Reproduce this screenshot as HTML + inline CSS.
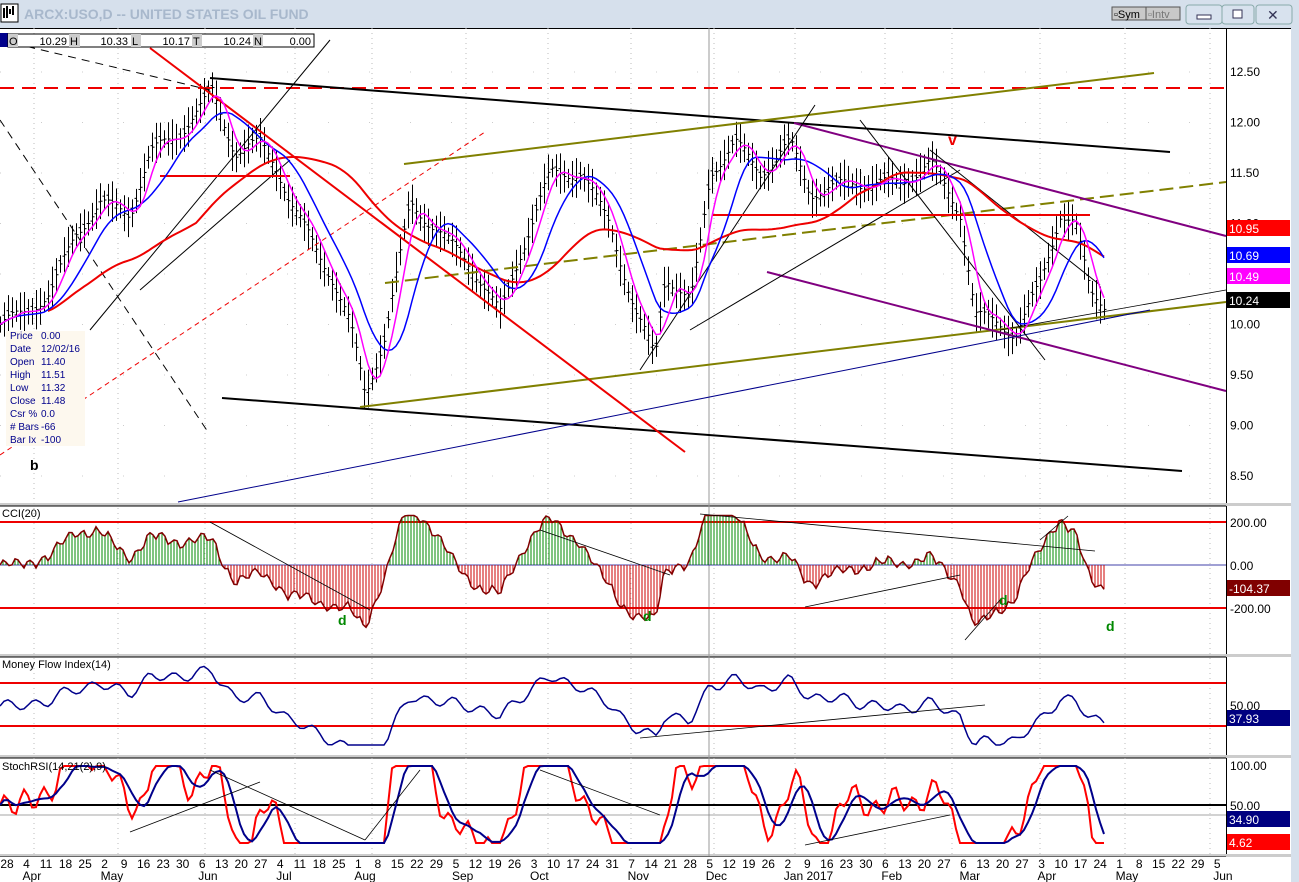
<!DOCTYPE html>
<html><head><meta charset="utf-8"><style>
body{margin:0;width:1299px;height:882px;overflow:hidden;background:#fff;font-family:"Liberation Sans",sans-serif}
#w{position:absolute;left:0;top:0}
</style></head><body>
<svg id="w" width="1299" height="882" xmlns="http://www.w3.org/2000/svg" font-family="Liberation Sans, sans-serif">
<rect x="0" y="0" width="1299" height="28" fill="#d6e0ec"/>
<rect x="1" y="4" width="17" height="18" fill="#fff" stroke="#000"/>
<path d="M4 18V8M7 18V6M10 14V9M13 15V6" stroke="#000" stroke-width="2"/>
<text x="24" y="19" font-size="14" font-weight="bold" fill="#a8b8cc">ARCX:USO,D -- UNITED STATES OIL FUND</text>
<rect x="1112" y="7" width="34" height="13" fill="#c8c8c8" stroke="#555"/><text x="1114" y="18" font-size="11">▫Sym</text>
<rect x="1146" y="7" width="34" height="13" fill="#c8c8c8" stroke="#555"/><text x="1148" y="18" font-size="11" fill="#777">▫Intv</text>
<rect x="1186" y="5" width="36" height="19" rx="3" fill="#d8e2ee" stroke="#8aa"/><rect x="1197" y="15" width="14" height="4" fill="#fff" stroke="#335"/>
<rect x="1222" y="5" width="32" height="19" rx="3" fill="#d8e2ee" stroke="#8aa"/><rect x="1233" y="10" width="9" height="8" fill="#fff" stroke="#335"/>
<rect x="1256" y="5" width="36" height="19" rx="3" fill="#d8e2ee" stroke="#8aa"/><text x="1267" y="20" font-size="14" fill="#335">✕</text>
<rect x="1291" y="28" width="8" height="854" fill="#d6e0ec"/>
<g id="g"></g>
<rect x="0" y="33" width="8" height="14" fill="#00008b"/>
<g font-size="11">
<rect x="8" y="34" width="306" height="13" fill="#fff" stroke="#000"/>
<rect x="8" y="34" width="10" height="13" fill="#ccc"/><text x="9" y="45">O</text><text x="67" y="45" text-anchor="end">10.29</text>
<rect x="69" y="34" width="11" height="13" fill="#ccc"/><text x="70" y="45">H</text><text x="128" y="45" text-anchor="end">10.33</text>
<rect x="131" y="34" width="10" height="13" fill="#ccc"/><text x="132" y="45">L</text><text x="190" y="45" text-anchor="end">10.17</text>
<rect x="192" y="34" width="10" height="13" fill="#ccc"/><text x="193" y="45">T</text><text x="251" y="45" text-anchor="end">10.24</text>
<rect x="253" y="34" width="10" height="13" fill="#ccc"/><text x="254" y="45">N</text><text x="311" y="45" text-anchor="end">0.00</text>
</g>
<rect x="6" y="331" width="79" height="115" fill="#fdf8ee"/>
<g font-size="10" fill="#00008b">
<text x="10" y="339">Price</text><text x="41" y="339">0.00</text>
<text x="10" y="352">Date</text><text x="41" y="352">12/02/16</text>
<text x="10" y="365">Open</text><text x="41" y="365">11.40</text>
<text x="10" y="378">High</text><text x="41" y="378">11.51</text>
<text x="10" y="391">Low</text><text x="41" y="391">11.32</text>
<text x="10" y="404">Close</text><text x="41" y="404">11.48</text>
<text x="10" y="417">Csr %</text><text x="41" y="417">0.0</text>
<text x="10" y="430"># Bars</text><text x="41" y="430">-66</text>
<text x="10" y="443">Bar Ix</text><text x="41" y="443">-100</text>
</g>
</svg>
<script>
var g=document.getElementById('g'),s='';
function L(x1,y1,x2,y2,c,w,d){s+='<line x1="'+x1+'" y1="'+y1+'" x2="'+x2+'" y2="'+y2+'" stroke="'+c+'" stroke-width="'+(w||1)+'"'+(d?' stroke-dasharray="'+d+'"':'')+'/>';}
function T(x,y,t,c,sz,a,f){s+='<text x="'+x+'" y="'+y+'" fill="'+(c||'#000')+'" font-size="'+(sz||12)+'"'+(a?' text-anchor="'+a+'"':'')+(f?' font-weight="bold"':'')+'>'+t+'</text>';}
function R(x,y,w,h,c){s+='<rect x="'+x+'" y="'+y+'" width="'+w+'" height="'+h+'" fill="'+c+'"/>';}
L(0,28.5,1291,28.5,'#000',1);L(1226.5,28,1226.5,856,'#000',1);
[505,656,757,856].forEach(function(y){R(0,y-2,1291,3,'#ccc');L(0,y+1,1226,y+1,'#000',1);});
var vx=[34,118,205,295,372,466,548,631,714,795,885,952,1040,1125,1210];
vx.forEach(function(x){L(x,28,x,856,'#bbb',1,'1 4');});
L(709,28,709,856,'#999',1);
function py(p){return 72+(12.5-p)*101;}
[12.5,12,11.5,11,10.5,10,9.5,9,8.5].forEach(function(p){L(0,py(p),1226,py(p),'#ccc',1,'1 40');T(1230,py(p)+4,p.toFixed(2),'#000',12);});
var k=[[0,10.0],[20,10.1],[50,10.3],[75,10.9],[100,11.2],[130,11.1],[150,11.7],[180,11.9],[212,12.3],[235,11.7],[260,11.8],[275,11.6],[290,11.2],[330,10.5],[350,10.0],[365,9.3],[385,9.9],[410,11.2],[440,10.9],[470,10.6],[500,10.1],[520,10.7],[550,11.5],[580,11.5],[610,11.0],[635,10.1],[655,9.7],[665,10.5],[690,10.2],[700,10.8],[710,11.5],[735,11.8],[760,11.5],[790,11.8],[810,11.3],[850,11.4],[900,11.4],[930,11.6],[960,11.1],[975,10.1],[1000,10.0],[1015,9.9],[1040,10.4],[1060,11.1],[1075,11.0],[1090,10.3],[1105,10.2]];
var P=[];for(var x=0;x<=1105;x+=4){var i=0;while(k[i+1][0]<x)i++;var a=k[i],b=k[i+1],t=(x-a[0])/(b[0]-a[0]);P.push([x,a[1]+(b[1]-a[1])*t+Math.sin(x*1.7)*0.06]);}
P.forEach(function(q,j){var h=0.08+Math.abs(Math.sin(j*2.3))*0.12;L(q[0]+0.5,py(q[1]+h),q[0]+0.5,py(q[1]-h),'#000',1);L(q[0]-1.5,py(q[1]+Math.sin(j)*0.05),q[0],py(q[1]+Math.sin(j)*0.05),'#000',1);L(q[0]+1,py(q[1]),q[0]+2.5,py(q[1]),'#000',1);});
function ma(n){return P.map(function(q,j){var sm=0,c=0;for(var m=Math.max(0,j-n+1);m<=j;m++){sm+=P[m][1];c++;}return [q[0],sm/c];});}
function pl(arr,f,c,w,d){s+='<polyline fill="none" stroke="'+c+'" stroke-width="'+w+'"'+(d?' stroke-dasharray="'+d+'"':'')+' points="'+arr.map(function(q){return q[0]+','+f(q[1]).toFixed(1);}).join(' ')+'"/>';}
var m5=ma(5),m10=ma(12),m50=ma(50),m20=ma(20);
L(0,88,1226,88,'#e00',2,'14 8');
L(210,78,1170,152,'#000',2);L(222,398,1182,471,'#000',2);
L(404,164,1154,73,'#808000',2);L(360,407,1226,302,'#808000',2);L(385,283,1226,182,'#808000',2,'14 6');
L(794,123,1226,236,'#800080',2);L(767,272,1226,391,'#800080',2);
L(178,502,1150,310,'#00008b',1);
L(150,48,685,452,'#e00',2);L(0,455,485,132,'#e00',1,'5 4');
L(0,40,210,90,'#000',1,'8 6');L(0,120,208,432,'#000',1,'8 6');L(90,330,330,40,'#000',1);L(140,290,290,160,'#000',1);
L(640,370,815,105,'#000',1);L(690,330,960,170,'#000',1);L(860,120,1045,360,'#000',1);L(930,150,1100,285,'#000',1);
L(1000,330,1226,290,'#000',0.8);
L(160,176,290,176,'#e00',2);L(712,215,1090,215,'#e00',2);
pl(m50.slice(12),py,'#e00',2);pl(m10,py,'#00f',1.5);pl(m5,py,'#f0f',1.5);
T(948,145,'v','#e00',16,null,1);T(30,470,'b','#000',14,null,1);
[[10.95,'#f00'],[10.69,'#00f'],[10.49,'#f0f'],[10.24,'#000']].forEach(function(q,j){var y=[220,247,268,292][j];R(1227,y,63,16,q[1]);T(1229,y+13,q[0].toFixed(2),'#fff',12);});
var c0=565;L(0,522,1226,522,'#e00',2);L(0,608,1226,608,'#e00',2);L(0,c0,1226,c0,'#00008b',0.8);
var cc=P.map(function(q,j){return [q[0],Math.max(-290,Math.min(230,(q[1]-m20[j][1])*260+Math.sin(j*1.9)*25))];});
var cx=[];for(var x=0;x<=1105;x+=3){var j=Math.min(cc.length-2,Math.floor(x/4)),t=(x-cc[j][0])/4;var v=cc[j][1]*(1-t)+cc[j+1][1]*t;cx.push([x,v]);L(x,c0,x,c0-v*0.215,v>0?'#080':'#c00',1);}
pl(cx,function(v){return c0-v*0.215;},'#800000',1.5);
T(2,517,'CCI(20)','#000',11);T(1230,527,'200.00');T(1230,570,'0.00');T(1230,613,'-200.00');
R(1227,580,63,16,'#800000');T(1229,593,'-104.37','#fff');
T(338,625,'d','#080',14,null,1);T(643,621,'d','#080',14,null,1);T(999,605,'d','#080',14,null,1);T(1106,631,'d','#080',14,null,1);
L(210,522,370,610,'#000',0.8);L(540,530,670,575,'#000',0.8);L(700,514,1095,551,'#000',0.8);L(805,607,960,575,'#000',0.8);L(965,640,1000,600,'#000',0.8);L(1040,540,1068,516,'#000',0.8);
L(0,683,1226,683,'#e00',2);L(0,726,1226,726,'#e00',2);
var mf=P.map(function(q,j){return [q[0],706-(q[1]-m50[j][1])*30-Math.sin(j*0.9)*5];});
pl(mf.map(function(q){return[q[0],Math.max(666,Math.min(745,q[1]))];}),function(v){return v;},'#00008b',1.5);
T(2,668,'Money Flow Index(14)','#000',11);T(1230,710,'50.00');R(1227,710,63,16,'#000080');T(1229,723,'37.93','#fff');
L(640,738,985,705,'#000',0.8);
L(0,805,1226,805,'#000',2);L(0,815,1226,815,'#888',0.8);
var sr=P.map(function(q,j){var d=(m5[j][1]-m10[j][1])*200;return [q[0],Math.max(766,Math.min(843,805-d-Math.sin(j*1.3)*10))];});
var sb=sr.map(function(q,j){var sm=0,c=0;for(var m=Math.max(0,j-4);m<=j;m++){sm+=sr[m][1];c++;}return [q[0],sm/c];});
pl(sr,function(v){return v;},'#f00',2);pl(sb,function(v){return v;},'#00008b',2);
T(2,770,'StochRSI(14,21(2),9)','#000',11);T(1230,770,'100.00');T(1230,810,'50.00');
R(1227,811,63,16,'#000080');T(1229,824,'34.90','#fff');R(1227,834,63,16,'#f00');T(1229,847,'4.62','#fff');
L(130,832,260,782,'#000',0.8);L(210,770,365,840,'#000',0.8);L(365,840,420,770,'#000',0.8);L(540,770,660,815,'#000',0.8);L(805,845,950,815,'#000',0.8);
R(0,857,1291,25,'#fff');
var dt=new Date(2016,2,28),mn=['Jan 2017','Feb','Mar','Apr','May','Jun','Jul','Aug','Sep','Oct','Nov','Dec'],pm=dt.getMonth();
for(var i=0;i<=62;i++){var x=i*19.52+7,dd=dt.getDate(),mm=dt.getMonth();T(x,868,dd,'#000',12,'middle');
if(mm!=pm){T(x-4,880,mn[mm],'#000',12);pm=mm;}
dt.setDate(dt.getDate()+7);}
g.innerHTML=s;
</script>
</body></html>
